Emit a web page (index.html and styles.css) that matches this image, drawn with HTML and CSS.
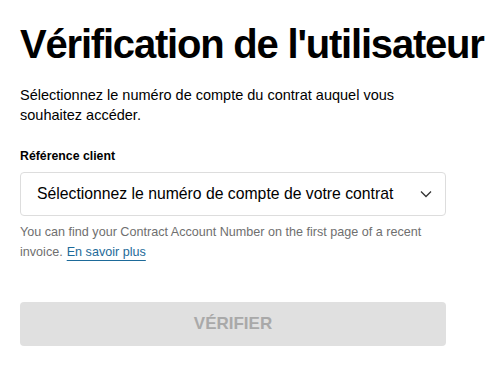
FILE: index.html
```html
<!DOCTYPE html>
<html>
<head>
	<title>Vérification de l'utilisateur</title>
	<meta charset="UTF-8">
	<meta name="viewport" content="width=device-width, initial-scale=1">
	<link rel="stylesheet" href="styles.css">
</head>
<body>

<div id="content">

	<h1 class="title">Vérification de l'utilisateur</h1>

	<p class="intro">Sélectionnez le numéro de compte du contrat auquel vous souhaitez accéder.</p>

	<form class="form">
		<label class="label" for="account">Référence client</label>

		<div class="select">
			<span class="select-text">Sélectionnez le numéro de compte de votre contrat</span>
			<svg class="chevron" width="12" height="8" viewBox="0 0 12 8">
				<polyline points="1,1.5 6,6.5 11,1.5" fill="none" stroke="#333" stroke-width="1.3"/>
			</svg>
		</div>

		<p class="help">You can find your Contract Account Number on the first page of a recent invoice.<a href="#" class="link">En savoir plus</a></p>

		<button type="button" class="btn" disabled>VÉRIFIER</button>
	</form>

</div>

</body>
</html>
```

FILE: styles.css
```css
* {
	box-sizing: border-box;
	font-family: "Liberation Sans", Arial, sans-serif;
}
body {
	margin: 0;
	padding: 0;
	background: #fff;
	color: #000;
}
#content {
	width: 426px;
	margin-left: 20px;
	padding-top: 22px;
}
.title {
	margin: 0;
	font-size: 40px;
	line-height: 44px;
	font-weight: bold;
	letter-spacing: -1.2px;
	white-space: nowrap;
}
.intro {
	margin: 19px 0 0;
	font-size: 14.5px;
	line-height: 20px;
	color: #000;
	width: 400px;
}
.form {
	margin-top: 23px;
}
.label {
	display: block;
	font-size: 12.3px;
	font-weight: bold;
	line-height: 16px;
}
.select {
	margin-top: 8px;
	height: 44px;
	border: 1px solid #ddd;
	border-radius: 4px;
	display: flex;
	align-items: center;
	justify-content: space-between;
	padding: 0 13px 0 16px;
}
.select-text {
	font-size: 15.75px;
	color: #000;
}
.chevron {
	display: block;
}
.help {
	margin: 6px 0 0;
	font-size: 12.6px;
	line-height: 20px;
	color: #6f6f6f;
}
.link {
	display: inline-block;
	margin-left: 4px;
	line-height: 20px;
	color: #1d6a99;
	text-decoration: underline;
	text-underline-offset: 4px;
}
.btn {
	display: block;
	width: 100%;
	height: 44px;
	margin-top: 40px;
	border: none;
	border-radius: 4px;
	background: #e0e0e0;
	color: #a9a9a9;
	font-size: 17px;
	font-weight: bold;
}
```
